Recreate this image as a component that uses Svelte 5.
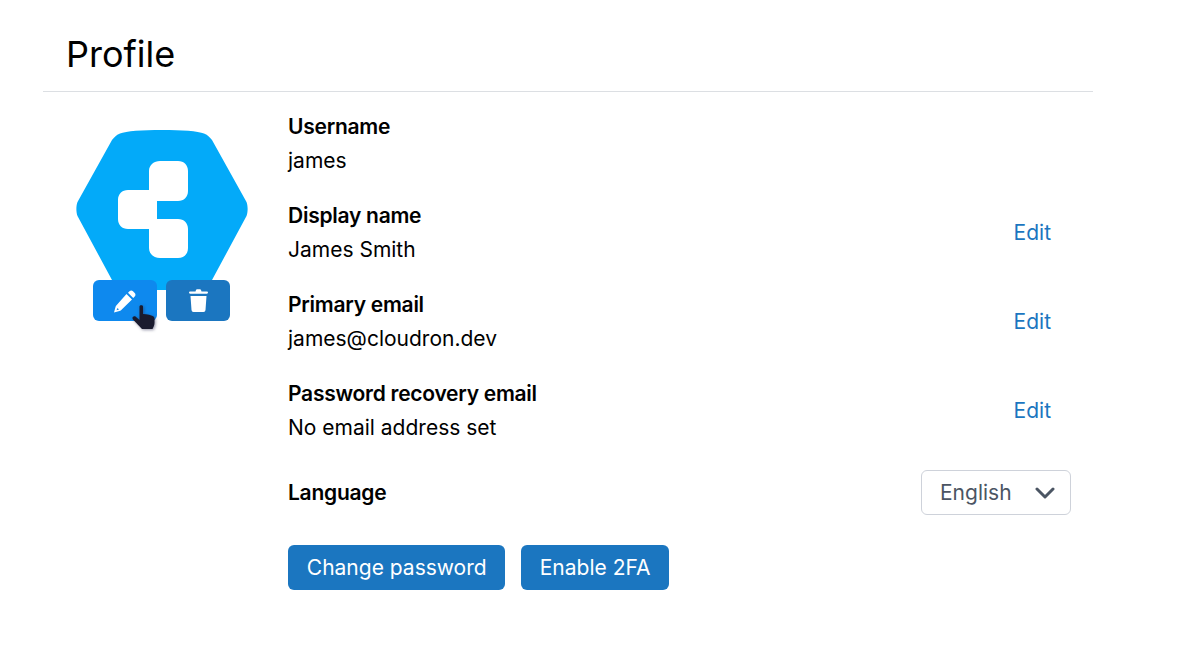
<script lang="ts">
  const rows = [
    { label: 'Username', value: 'james', editable: false },
    { label: 'Display name', value: 'James Smith', editable: true },
    { label: 'Primary email', value: 'james@cloudron.dev', editable: true },
    { label: 'Password recovery email', value: 'No email address set', editable: true }
  ];
</script>

<main class="profile">
  <header class="title"><h1>Profile</h1></header>
  <div class="body">
    <div class="avatar">
      <svg class="logo" width="172" height="160" viewBox="0 0 172 160">
        <path fill="#03aaf9" d="M86 0C66 0 50 1 44 3.500C40 5 38 7.500 36 10L1.500 72C0 76 0 82 1.500 86L36 150C38 152.500 40 155 44 156.500C50 159 66 160 86 160C106 160 122 159 128 156.500C132 155 134 152.500 136 150L170.500 86C172 82 172 76 170.500 72L136 10C134 7.500 132 5 128 3.500C122 1 106 0 86 0Z"/>
        <path fill="#fff" d="M84 31H102C108 31 112 35 112 41V61C112 67 108 71 102 71H81V89H102C108 89 112 93 112 99V118C112 124 108 128 102 128H84C78 128 73 124 73 118V99H52C46 99 42 95 42 89V70C42 64 46 60 52 60H73V41C73 35 78 31 84 31Z"/>
      </svg>
      <div class="avatar-actions">
        <button class="icon-btn hover" aria-label="Edit">
          <svg width="24" height="24" viewBox="0 0 24 24">
            <path fill="#fff" d="M13.500 5L19 10.500 8 21.200C7.600 21.600 7 21.900 6.500 22L1 23.500 2.500 18C2.600 17.500 2.900 17 3.300 16.500Z"/>
            <path fill="#fff" d="M15 3.800L16.500 2.300C17.500 1.300 19 1.300 20 2.300L21.700 4C22.700 5 22.700 6.500 21.700 7.500L20.200 9Z"/>
            <path fill="#0e89ee" d="M4.500 19L6 20.500 3.500 21.200Z"/>
          </svg>
        </button>
        <button class="icon-btn" aria-label="Delete">
          <svg width="19" height="23" viewBox="0 0 19 23">
            <path fill="#fff" d="M6.500 2.500L7 1Q7.300 .3 8 .3H11Q11.700 .3 12 1L12.500 2.500H18Q19 2.500 19 3.600Q19 4.700 18 4.700H1Q0 4.700 0 3.600Q0 2.500 1 2.500Z"/>
            <path fill="#fff" d="M1.500 7H17.500L16.500 21Q16.400 23 14.500 23H4.500Q2.600 23 2.500 21Z"/>
          </svg>
        </button>
        <svg class="cursor" width="23" height="24" viewBox="0 0 23 24">
          <path fill="#1a1b2e" d="M7.500 1.500C7.500 -.2 11 -.2 11 1.500V9L14 9.300 17 9.800 20 10.800C21.500 11.300 22.500 12 22.500 14V18C22.500 20 21.500 22 20.500 24H10L1 14.500C-.5 12.500 1.500 10.500 3.500 11.500L7.500 15Z"/>
        </svg>
      </div>
    </div>

    <div class="details">
      {#each rows as row}
        <div class="row">
          <div>
            <div class="label">{row.label}</div>
            <div class="value">{row.value}</div>
          </div>
          {#if row.editable}
            <button class="link">Edit</button>
          {/if}
        </div>
      {/each}

      <div class="row language">
        <div class="label">Language</div>
        <div class="select">
          <span>English</span>
          <svg width="20" height="12" viewBox="0 0 20 12"><path fill="none" stroke="#4b5563" stroke-width="3" stroke-linecap="round" stroke-linejoin="round" d="M2 2l8 8 8-8"/></svg>
        </div>
      </div>

      <div class="actions">
        <button class="primary">Change password</button>
        <button class="primary">Enable 2FA</button>
      </div>
    </div>
  </div>
</main>

<style>
  :global(body) {
    background: #fff;
    color: #000;
    font-family: Inter, 'Liberation Sans', sans-serif;
  }

  .profile {
    width: 1050px;
    margin-left: 43px;
    font-size: 21px;
    line-height: 32px;
  }

  .title {
    height: 92px;
    box-sizing: border-box;
    border-bottom: 1px solid #dcdfe3;
    padding: 32px 0 0 23px;
  }

  h1 {
    margin: 0;
    font-size: 36px;
    line-height: 44px;
    font-weight: 400;
  }

  .body {
    display: flex;
    padding-top: 18px;
  }

  .avatar {
    width: 245px;
    flex-shrink: 0;
    padding: 20px 0 0 33px;
    box-sizing: border-box;
  }

  .logo {
    display: block;
  }

  .avatar-actions {
    position: relative;
    display: flex;
    gap: 9px;
    margin: -10px 0 0 17px;
  }

  .icon-btn {
    width: 64px;
    height: 41px;
    padding: 0;
    border: 0;
    border-radius: 6px;
    background: #1b76c0;
    display: flex;
    align-items: center;
    justify-content: center;
  }

  .icon-btn.hover {
    background: #0e89ee;
  }

  .cursor {
    position: absolute;
    left: 39px;
    top: 25px;
    overflow: visible;
    filter: drop-shadow(1px 1px 1.5px rgba(40, 40, 80, 0.5));
  }

  .details {
    flex: 1;
    padding-right: 22px;
  }

  .row {
    display: flex;
    justify-content: space-between;
    align-items: center;
    height: 89px;
    box-sizing: border-box;
    padding-bottom: 21px;
  }

  .label {
    font-weight: 600;
    letter-spacing: -0.26px;
    line-height: 32px;
    height: 33px;
  }

  .value {
    line-height: 34px;
  }

  .link {
    border: 0;
    background: none;
    padding: 0;
    margin-right: 20px;
    font: inherit;
    color: #1b76c0;
  }

  .row.language {
    height: 45px;
    padding: 0;
    margin-top: 4px;
  }

  .language .label {
    padding-top: 1px;
  }

  .select {
    width: 150px;
    height: 45px;
    box-sizing: border-box;
    border: 1px solid #ced2da;
    border-radius: 6px;
    color: #4b5563;
    display: flex;
    align-items: center;
    justify-content: space-between;
    padding: 0 15px 0 18px;
  }

  .actions {
    display: flex;
    gap: 15.5px;
    margin-top: 30px;
  }

  .primary {
    height: 45px;
    padding: 0 18.8px;
    border: 0;
    border-radius: 6px;
    background: #1b76c0;
    color: #fff;
    font: inherit;
  }
</style>
